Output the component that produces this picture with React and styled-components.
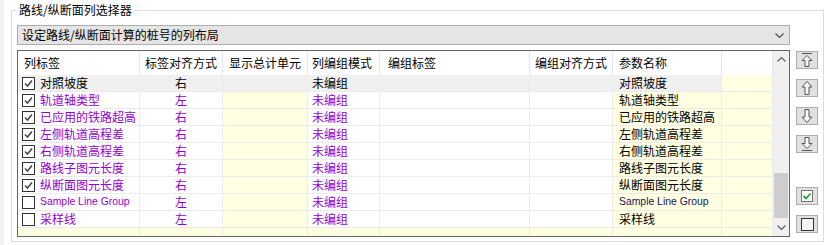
import React from "react";
import styled, { createGlobalStyle } from "styled-components";

const GlobalStyle = createGlobalStyle`
  html, body {
    margin: 0;
    padding: 0;
    background: #ffffff;
  }
  body {
    font-family: "Noto Sans CJK SC", "Liberation Sans", sans-serif;
    font-size: 12px;
    color: #000;
  }
`;

const PURPLE = "#9400d3";
const YELLOW = "#ffffe1";
const GRID = "#ebebeb";

const Page = styled.div`
  width: 826px;
  height: 245px;
  box-sizing: border-box;
  padding: 2px 2px 3px 11px;
  display: flex;
  background: linear-gradient(to right, #f3f3f3 0, #f3f3f3 4px, #ffffff 4px);
`;

const GroupBox = styled.fieldset`
  flex: 1;
  margin: 0;
  min-width: 0;
  box-sizing: border-box;
  border: 1px solid #dcdcdc;
  padding: 7px 4px 4px 5px;
  display: flex;
  flex-direction: column;
  gap: 5px;
`;

const GroupTitle = styled.legend`
  padding: 0 2px;
  line-height: 16px;
  font-size: 12px;
`;

const Dropdown = styled.div`
  width: 773px;
  height: 20px;
  box-sizing: border-box;
  border: 1px solid #adadad;
  background: #e5e5e5;
  display: flex;
  align-items: center;
  justify-content: space-between;
  padding: 0 5px 0 4px;
  line-height: 16px;
`;

const Body = styled.div`
  display: flex;
  gap: 6px;
  height: 187px;
`;

const Table = styled.div`
  width: 773px;
  box-sizing: border-box;
  border: 1px solid #646464;
  display: flex;
  background: ${YELLOW};
`;

const Grid = styled.div`
  width: 755px;
  display: grid;
  grid-template-columns: 122px 83px 85px 72px 150px 83px 109px 51px;
  grid-template-rows: 24px repeat(9, 17px) 1fr;
  overflow: hidden;
`;

const HeadCell = styled.div`
  background: #ffffff;
  border-right: 1px solid #e5e5e5;
  display: flex;
  align-items: center;
  padding-left: ${(p) => p.$pad ?? 6}px;
  white-space: nowrap;
  line-height: 16px;
`;

const Cell = styled.div`
  box-sizing: border-box;
  background: ${(p) => p.$bg || "#ffffff"};
  border-right: 1px solid ${GRID};
  border-bottom: 1px solid ${GRID};
  display: flex;
  align-items: center;
  justify-content: ${(p) => (p.$center ? "center" : "flex-start")};
  padding-left: ${(p) => (p.$center ? 0 : p.$pad ?? 5)}px;
  color: ${(p) => p.$color || "#000"};
  white-space: nowrap;
  line-height: 16px;
  font-family: ${(p) =>
    p.$latin
      ? `"Liberation Sans", "Noto Sans CJK SC", sans-serif`
      : `"Noto Sans CJK SC", "Liberation Sans", sans-serif`};
  font-size: ${(p) => (p.$latin ? "10.4px" : "12px")};
`;

const FillCell = styled.div`
  background: ${YELLOW};
  border-right: 1px solid ${GRID};
`;

const CheckBox = styled.span`
  width: 13px;
  height: 13px;
  box-sizing: border-box;
  border: 1px solid #333333;
  background: #ffffff;
  margin: 0 5px 0 -1px;
  display: inline-flex;
  align-items: center;
  justify-content: center;
  flex: none;
`;

const ScrollBar = styled.div`
  width: 16px;
  background: #f0f0f0;
  display: flex;
  flex-direction: column;
  align-items: center;
`;

const ScrollArrow = styled.div`
  height: 17px;
  width: 100%;
  display: flex;
  align-items: center;
  justify-content: center;
`;

const Thumb = styled.div`
  width: 14px;
  height: 45px;
  background: #cdcdcd;
  margin-top: ${(p) => p.$offset}px;
`;

const Spacer = styled.div`
  flex: 1;
`;

const SideButtons = styled.div`
  width: 22px;
  padding-top: 1px;
  display: flex;
  flex-direction: column;
  gap: 10px;
`;

const SideButton = styled.div`
  width: 22px;
  height: 18px;
  box-sizing: border-box;
  border: 1px solid #adadad;
  background: #e1e1e1;
  display: flex;
  align-items: center;
  justify-content: center;
  margin-top: ${(p) => p.$gapAbove || 0}px;
`;

const Chevron = ({ up, color = "#555" }) => (
  <svg width="9" height="5" viewBox="0 0 9 5">
    <polyline
      points={up ? "0.5,4.5 4.5,0.5 8.5,4.5" : "0.5,0.5 4.5,4.5 8.5,0.5"}
      fill="none"
      stroke={color}
      strokeWidth="1.2"
    />
  </svg>
);

const Tick = () => (
  <svg width="11" height="11" viewBox="0 0 11 11">
    <polyline points="2,5.5 4.5,8 9,2.5" fill="none" stroke="#4a4a4a" strokeWidth="1.6" />
  </svg>
);

const ArrowIcon = ({ down, bar }) => (
  <svg width="12" height="14" viewBox="0 0 12 14" style={{ transform: down ? "scaleY(-1)" : "none" }}>
    {bar && <line x1="1" y1="0.5" x2="11" y2="0.5" stroke="#555" />}
    <polygon
      points={bar ? "6,2.5 11,7.5 8,7.5 8,13.5 4,13.5 4,7.5 1,7.5" : "6,0.5 11,6 8,6 8,13.5 4,13.5 4,6 1,6"}
      fill="#fafafa"
      stroke="#555"
    />
  </svg>
);

const CheckAllIcon = () => (
  <svg width="12" height="12" viewBox="0 0 12 12">
    <rect x="0.5" y="0.5" width="11" height="11" fill="#fff" stroke="#777" />
    <polyline points="2.5,6 5,8.5 9.5,3.5" fill="none" stroke="#1fa03c" strokeWidth="1.8" />
  </svg>
);

const UncheckAllIcon = () => (
  <svg width="13" height="13" viewBox="0 0 13 13">
    <rect x="0.5" y="0.5" width="12" height="12" fill="#f4f4f4" stroke="#333" />
  </svg>
);

const headers = [
  { text: "列标签", pad: 6 },
  { text: "标签对齐方式", pad: 5 },
  { text: "显示总计单元", pad: 6 },
  { text: "列编组模式", pad: 4 },
  { text: "编组标签", pad: 8 },
  { text: "编组对齐方式", pad: 5 },
  { text: "参数名称", pad: 6 },
  { text: "", pad: 0 },
];

const rows = [
  { label: "对照坡度", checked: true, align: "右", active: true },
  { label: "轨道轴类型", checked: true, align: "左" },
  { label: "已应用的铁路超高", checked: true, align: "右" },
  { label: "左侧轨道高程差", checked: true, align: "右" },
  { label: "右侧轨道高程差", checked: true, align: "右" },
  { label: "路线子图元长度", checked: true, align: "右" },
  { label: "纵断面图元长度", checked: true, align: "右" },
  { label: "Sample Line Group", checked: false, align: "左", latin: true },
  { label: "采样线", checked: false, align: "左" },
];

const Row = ({ row }) => {
  const gray = "#f0f0f0";
  const plain = row.active ? gray : "#ffffff";
  const tinted = row.active ? gray : YELLOW;
  const color = row.active ? "#000" : PURPLE;
  return (
    <>
      <Cell $bg={plain} $color={color} $latin={row.latin} $pad={5}>
        <CheckBox>{row.checked && <Tick />}</CheckBox>
        {row.label}
      </Cell>
      <Cell $bg={plain} $color={color} $center>
        {row.align}
      </Cell>
      <Cell $bg={tinted} />
      <Cell $bg={plain} $color={color} $pad={4}>
        未编组
      </Cell>
      <Cell $bg={plain} />
      <Cell $bg={plain} />
      <Cell $bg={tinted} $pad={6} $latin={row.latin} $color={row.latin ? "#15155a" : "#000"}>
        {row.label}
      </Cell>
      <Cell $bg={YELLOW} />
    </>
  );
};

const App = () => {
  return (
    <Page>
      <GlobalStyle />
      <GroupBox>
        <GroupTitle>路线/纵断面列选择器</GroupTitle>
        <Dropdown>
          <span>设定路线/纵断面计算的桩号的列布局</span>
          <Chevron />
        </Dropdown>
        <Body>
          <Table>
            <Grid>
              {headers.map((h, i) => (
                <HeadCell key={i} $pad={h.pad}>
                  {h.text}
                </HeadCell>
              ))}
              {rows.map((r, i) => (
                <Row key={i} row={r} />
              ))}
              {headers.map((_, i) => (
                <FillCell key={`f${i}`} />
              ))}
            </Grid>
            <ScrollBar>
              <ScrollArrow>
                <Chevron up color="#606060" />
              </ScrollArrow>
              <Thumb $offset={105} />
              <Spacer />
              <ScrollArrow>
                <Chevron color="#606060" />
              </ScrollArrow>
            </ScrollBar>
          </Table>
          <SideButtons>
            <SideButton>
              <ArrowIcon bar />
            </SideButton>
            <SideButton>
              <ArrowIcon />
            </SideButton>
            <SideButton>
              <ArrowIcon down />
            </SideButton>
            <SideButton>
              <ArrowIcon down bar />
            </SideButton>
            <SideButton $gapAbove={24}>
              <CheckAllIcon />
            </SideButton>
            <SideButton>
              <UncheckAllIcon />
            </SideButton>
          </SideButtons>
        </Body>
      </GroupBox>
    </Page>
  );
};

export default App;
